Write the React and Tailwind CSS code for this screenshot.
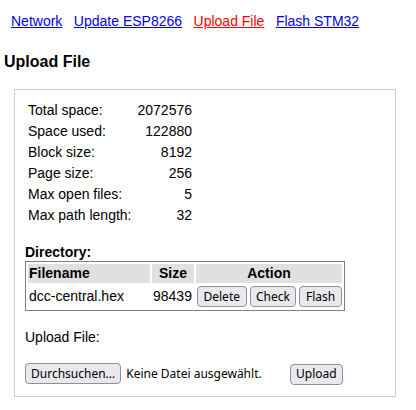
const links = [
  { label: "Network", active: false },
  { label: "Update ESP8266", active: false },
  { label: "Upload File", active: true },
  { label: "Flash STM32", active: false },
];

const stats = [
  ["Total space:", "2072576"],
  ["Space used:", "122880"],
  ["Block size:", "8192"],
  ["Page size:", "256"],
  ["Max open files:", "5"],
  ["Max path length:", "32"],
];

function Btn({ children, wide }) {
  return (
    <button
      className={
        wide
          ? "h-[21px] px-[5.5px] border border-[#8f8f9d] rounded-[4px] bg-[#e9e9ed] font-['Noto_Sans',sans-serif] text-[12px] leading-none text-black"
          : "h-[21px] px-[5px] border border-[#8f8f9d] rounded-[4px] bg-[#e9e9ed] font-['Noto_Sans',sans-serif] text-[12px] leading-none text-black"
      }
    >
      {children}
    </button>
  );
}

export default function App() {
  return (
    <div className="pl-[4px] font-['Liberation_Sans',Arial,sans-serif] text-[14px] text-black bg-white min-h-[410px]">
      {/* Nav */}
      <nav className="pt-[13px] pl-[7px] flex gap-[11.5px] leading-[16px]">
        {links.map((l) => (
          <a
            key={l.label}
            href="#"
            className={l.active ? "underline text-[#ff0000]" : "underline text-[#0000ee]"}
          >
            {l.label}
          </a>
        ))}
      </nav>

      <h2 className="mt-[24px] text-[16px] leading-[18px] font-bold">Upload File</h2>

      {/* Box */}
      <div className="mt-[18px] ml-[10px] w-[382px] border border-[#cccccc] pt-[10px] pb-[11px] pl-[10px]">
        <div className="pl-[3px]">
          {stats.map(([k, v]) => (
            <div key={k} className="w-[164px] flex justify-between py-[2px] leading-[17px]">
              <span>{k}</span>
              <span>{v}</span>
            </div>
          ))}
        </div>

        <div className="mt-[18px] font-bold leading-[17px]">Directory:</div>
        <table className="w-[320px] table-fixed border-separate border-spacing-[2px] border border-[#808080] leading-[17px]">
          <thead>
            <tr>
              <th className="w-[122px] p-[1px] bg-[#e0e0e0] text-left">Filename</th>
              <th className="w-[42px] p-[1px] bg-[#e0e0e0] text-center">Size</th>
              <th className="w-[146px] p-[1px] bg-[#e0e0e0] text-center">Action</th>
            </tr>
          </thead>
          <tbody>
            <tr>
              <td className="p-[1px] whitespace-nowrap">dcc-central.hex</td>
              <td className="p-[1px]">98439</td>
              <td className="p-[1px]">
                <div className="flex gap-[3px]">
                  <Btn wide>Delete</Btn>
                  <Btn wide>Check</Btn>
                  <Btn wide>Flash</Btn>
                </div>
              </td>
            </tr>
          </tbody>
        </table>

        <div className="mt-[18px] leading-[17px]">Upload File:</div>
        <div className="mt-[17px] flex items-center">
          <div className="w-[261px] flex items-center">
            <Btn>Durchsuchen...</Btn>
            <span className="ml-[5px] font-['Noto_Sans',sans-serif] text-[12px]">Keine Datei ausgewählt.</span>
          </div>
          <div className="ml-[4px]">
            <Btn>Upload</Btn>
          </div>
        </div>
      </div>
    </div>
  );
}
